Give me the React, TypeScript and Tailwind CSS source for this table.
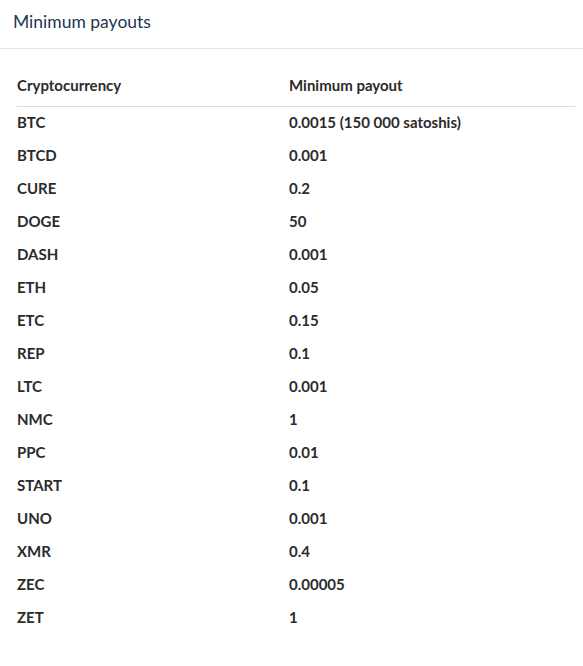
const payouts: [string, string][] = [
  ['BTC', '0.0015 (150 000 satoshis)'],
  ['BTCD', '0.001'],
  ['CURE', '0.2'],
  ['DOGE', '50'],
  ['DASH', '0.001'],
  ['ETH', '0.05'],
  ['ETC', '0.15'],
  ['REP', '0.1'],
  ['LTC', '0.001'],
  ['NMC', '1'],
  ['PPC', '0.01'],
  ['START', '0.1'],
  ['UNO', '0.001'],
  ['XMR', '0.4'],
  ['ZEC', '0.00005'],
  ['ZET', '1'],
];

export default function App() {
  return (
    <div className="min-h-screen bg-white font-['Lato','Liberation_Sans',sans-serif]">
      <div className="h-[49px] px-[13px] pb-[5px] flex items-center border-b border-[#e3e3e3]">
        <h2 className="text-[17.5px] text-[#1e3552] leading-none">Minimum payouts</h2>
      </div>

      <div className="px-[17px] pt-[16px] pb-6">
        <table className="w-[558px] border-collapse text-[15px] font-bold text-[#2b2b2b]">
          <thead>
            <tr className="border-b border-[#dedede]">
              <th className="w-[272px] h-[41px] p-0 text-left align-middle">Cryptocurrency</th>
              <th className="h-[41px] p-0 text-left align-middle">Minimum payout</th>
            </tr>
          </thead>
          <tbody>
            {payouts.map(([coin, amount]) => (
              <tr key={coin} className="h-[33px]">
                <td className="p-0 pb-[1px] align-middle">{coin}</td>
                <td className="p-0 pb-[1px] align-middle">{amount}</td>
              </tr>
            ))}
          </tbody>
        </table>
      </div>
    </div>
  );
}
